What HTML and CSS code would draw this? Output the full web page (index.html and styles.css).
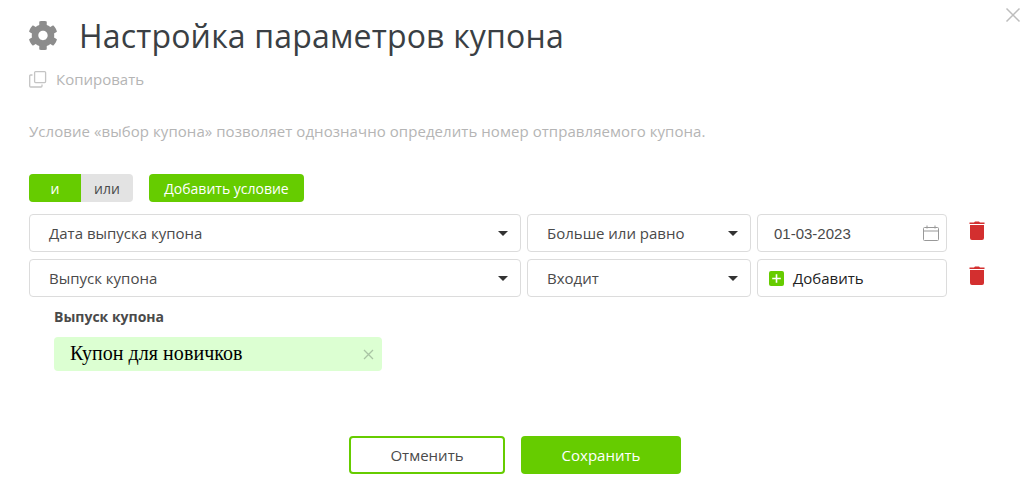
FILE: index.html
```html
<!DOCTYPE html>
<html lang="ru">
<head>
<meta charset="utf-8">
<title>Настройка параметров купона</title>
<link rel="stylesheet" href="styles.css">
</head>
<body>
<div class="dialog">
  <button class="close" aria-label="Закрыть">
    <svg width="16" height="16" viewBox="0 0 16 16"><path d="M1.5 1.5l13 13M14.5 1.5l-13 13" stroke="#bdbdbd" stroke-width="1.5" fill="none"/></svg>
  </button>
  <header class="head">
    <svg class="gear" width="28" height="29" viewBox="18 8 476 496"><path fill="#8c8c8c" d="M487.4 315.7l-42.6-24.6c4.3-23.2 4.3-47 0-70.2l42.6-24.6c4.9-2.8 7.1-8.6 5.5-14-11.1-35.6-30-67.8-54.7-94.6-3.8-4.1-10-5.1-14.8-2.3L380.8 110c-17.9-15.4-38.5-27.3-60.8-35.1V25.8c0-5.6-3.9-10.5-9.4-11.7-36.7-8.2-74.3-7.8-109.2 0-5.5 1.2-9.4 6.1-9.4 11.7V75c-22.2 7.9-42.8 19.8-60.8 35.1L88.7 85.5c-4.9-2.8-11-1.9-14.8 2.3-24.7 26.7-43.6 58.9-54.7 94.6-1.7 5.4.6 11.2 5.5 14L67.3 221c-4.3 23.2-4.3 47 0 70.2l-42.6 24.6c-4.9 2.8-7.1 8.6-5.5 14 11.1 35.6 30 67.8 54.7 94.6 3.8 4.1 10 5.1 14.8 2.3l42.6-24.6c17.9 15.4 38.5 27.3 60.8 35.1v49.2c0 5.6 3.9 10.5 9.4 11.7 36.7 8.2 74.3 7.8 109.2 0 5.5-1.2 9.4-6.1 9.4-11.7v-49.2c22.2-7.9 42.8-19.8 60.8-35.1l42.6 24.6c4.9 2.8 11 1.9 14.8-2.3 24.7-26.7 43.6-58.9 54.7-94.6 1.5-5.5-.7-11.3-5.6-14.1zM256 336c-44.1 0-80-35.9-80-80s35.9-80 80-80 80 35.9 80 80-35.9 80-80 80z"/></svg>
    <h1 class="title">Настройка параметров купона</h1>
  </header>
  <div class="copy">
    <svg width="18" height="18" viewBox="0 0 18 18" fill="none" stroke="#c4c4c4" stroke-width="1.3"><rect x="5.6" y="1.6" width="11" height="11" rx="1"/><path d="M3.5 5H1.6a.9.9 0 0 0-.9.9V16a1 1 0 0 0 1 1H12a1 1 0 0 0 1-1v-1.4"/></svg>
    <span>Копировать</span>
  </div>
  <p class="hint">Условие «выбор купона» позволяет однозначно определить номер отправляемого купона.</p>
  <div class="toolbar">
    <div class="switch">
      <span class="switch-item active">и</span>
      <span class="switch-item">или</span>
    </div>
    <button class="add-condition">Добавить условие</button>
  </div>
  <div class="row">
    <div class="field select wide"><span>Дата выпуска купона</span><i class="caret"></i></div>
    <div class="field select mid"><span>Больше или равно</span><i class="caret"></i></div>
    <div class="field date">
      <span>01-03-2023</span>
      <svg width="16" height="16" viewBox="0 0 16 16" fill="none" stroke="#999" stroke-width="1"><rect x="0.5" y="2.5" width="15" height="13" rx="1"/><path d="M0.5 6h15M4 0.5v3M12 0.5v3"/></svg>
    </div>
    <button class="trash" aria-label="Удалить"><svg width="16" height="19" viewBox="0 0 16 19"><path fill="#d32f2f" d="M1 4h14v13a2 2 0 0 1-2 2H3a2 2 0 0 1-2-2zM0.5 1.4H5L6 .6h4l1 .8h4.500V3H.5z"/></svg></button>
  </div>
  <div class="row">
    <div class="field select wide"><span>Выпуск купона</span><i class="caret"></i></div>
    <div class="field select mid"><span>Входит</span><i class="caret"></i></div>
    <div class="field add">
      <svg width="15" height="15" viewBox="0 0 15 15"><rect width="15" height="15" rx="2" fill="#66cc00"/><path d="M7.5 3.2v8.6M3.2 7.5h8.6" stroke="#fff" stroke-width="1.6"/></svg>
      <span>Добавить</span>
    </div>
    <button class="trash" aria-label="Удалить"><svg width="16" height="19" viewBox="0 0 16 19"><path fill="#d32f2f" d="M1 4h14v13a2 2 0 0 1-2 2H3a2 2 0 0 1-2-2zM0.5 1.4H5L6 .6h4l1 .8h4.500V3H.5z"/></svg></button>
  </div>
  <div class="issue">
    <div class="issue-label">Выпуск купона</div>
    <div class="chip">
      <span class="chip-text">Купон для новичков</span>
      <svg width="11" height="11" viewBox="0 0 11 11"><path d="M1 1l9 9M10 1l-9 9" stroke="#a9c4a4" stroke-width="1.3" fill="none"/></svg>
    </div>
  </div>
  <footer class="actions">
    <button class="btn cancel">Отменить</button>
    <button class="btn save">Сохранить</button>
  </footer>
</div>
</body>
</html>
```

FILE: styles.css
```css
* { box-sizing: border-box; }
html, body { margin: 0; padding: 0; background: #fff; }
body { font-family: "Open Sans", sans-serif; color: #4a4a4a; width: 1030px; height: 481px; overflow: hidden; }
button { font-family: inherit; cursor: pointer; }
.dialog { position: relative; padding: 0 0 0 29px; height: 481px; }
.close { position: absolute; top: 7px; right: 9px; width: 16px; height: 16px; padding: 0; border: 0; background: none; display: flex; }
.head { display: flex; align-items: center; height: 71px; }
.gear { margin-right: 22px; flex: none; }
.title { margin: 0 0 1px; font-size: 32px; letter-spacing: 0.17px; font-weight: 400; color: #3a3f44; line-height: 41px; }
.copy { display: flex; align-items: center; gap: 9px; height: 16px; font-size: 15px; color: #b5b5b5; }
.copy svg { flex: none; }
.hint { margin: 34px 0 0; font-size: 15px; letter-spacing: 0.06px; line-height: 20px; color: #b5b5b5; }
.toolbar { display: flex; gap: 16px; margin-top: 33px; height: 28px; }
.switch { display: flex; width: 104px; border-radius: 4px; overflow: hidden; background: #e3e3e3; }
.switch-item { flex: 1; display: flex; align-items: center; justify-content: center; font-size: 14px; color: #4a4a4a; }
.switch-item.active { background: #66cc00; color: #fff; }
.add-condition { width: 155px; border: 0; border-radius: 4px; background: #66cc00; color: #fff; font-size: 14px; padding: 0; }
.row { display: flex; gap: 6px; margin-top: 12px; height: 38px; }
.row + .row { margin-top: 7px; }
.field { display: flex; align-items: center; border: 1px solid #dcdcdc; border-radius: 4px; font-size: 15px; color: #4a4a4a; background: #fff; }
.select { justify-content: space-between; padding: 0 12px 0 19px; }
.wide { width: 492px; }
.mid { width: 224px; }
.date { width: 190px; justify-content: space-between; padding: 0 7px 0 16px; font-family: "Liberation Sans", sans-serif; }
.add { width: 190px; padding-left: 11px; gap: 9px; color: #222; }
.caret { width: 0; height: 0; border-left: 5.5px solid transparent; border-right: 5.5px solid transparent; border-top: 5px solid #333; }
.trash { margin-left: 16px; width: 16px; height: 19px; padding: 0; border: 0; background: none; margin-top: 7px; display: flex; }
.issue { padding-left: 25px; }
.issue-label { margin-top: 11px; font-size: 14px; font-weight: 700; line-height: 18px; color: #4a4a4a; }
.chip { display: flex; align-items: center; justify-content: space-between; width: 328px; height: 34px; margin-top: 11px; padding: 0 8px 0 16px; background: #dcffd2; border-radius: 4px; font-family: "Liberation Serif", serif; font-size: 20px; letter-spacing: 0.05px; color: #000; }
.chip-text { margin-bottom: 2px; }
.actions { display: flex; gap: 16px; margin-top: 65px; padding-left: 320px; }
.btn { height: 38px; border-radius: 4px; font-size: 15px; padding: 0; }
.cancel { width: 156px; background: #fff; border: 2px solid #66cc00; color: #4a4a4a; }
.save { width: 160px; background: #66cc00; border: 0; color: #fff; font-weight: 500; }
```
